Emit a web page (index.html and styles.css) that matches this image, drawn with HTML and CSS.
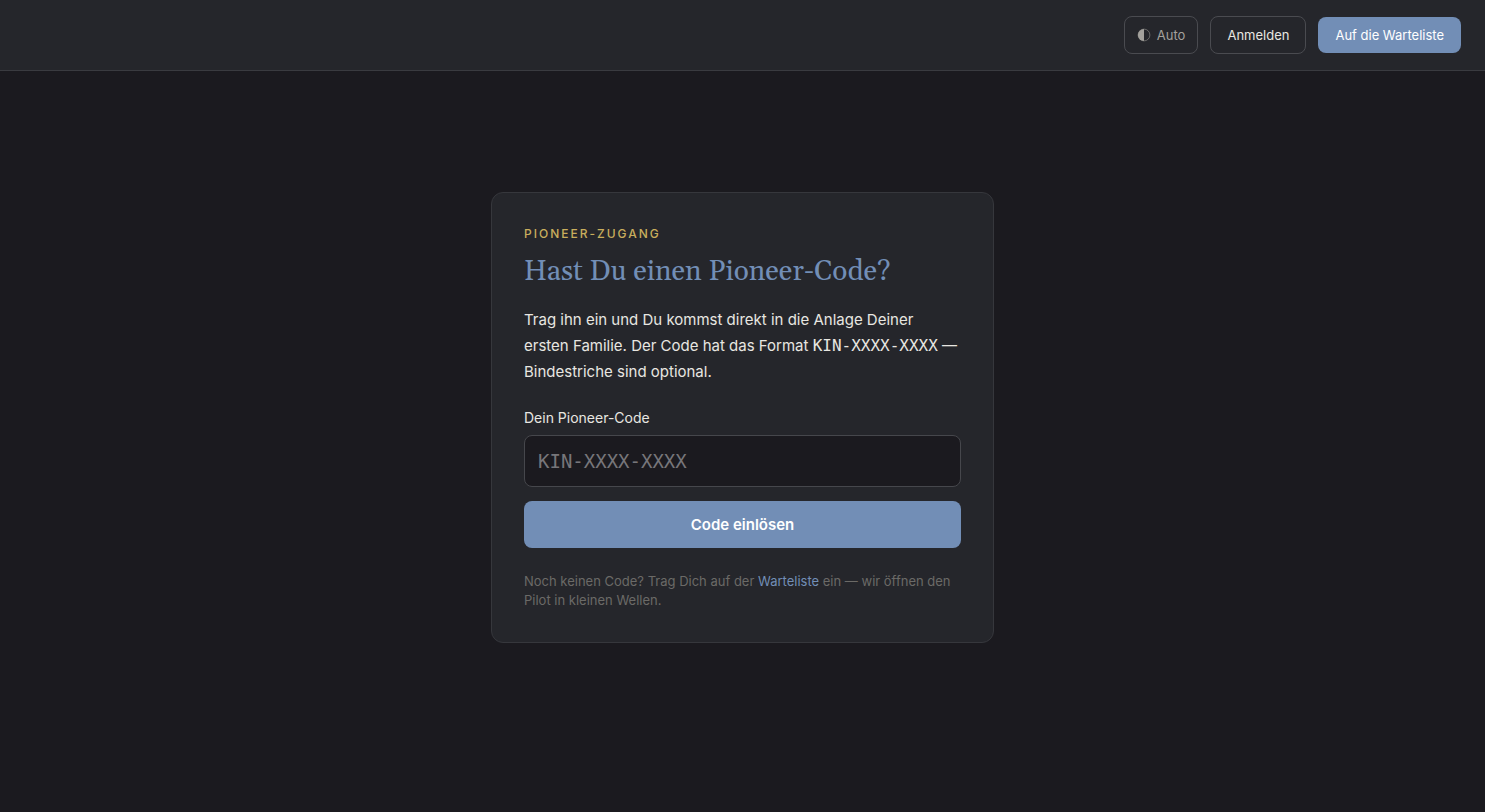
FILE: index.html
```html
<!DOCTYPE html>
<html lang="de">
<head>
  <meta charset="utf-8">
  <meta name="viewport" content="width=device-width, initial-scale=1">
  <title>Pioneer-Zugang</title>
  <link rel="stylesheet" href="styles.css">
</head>
<body>
  <header class="topbar">
    <button type="button" class="btn btn-theme">
      <svg class="theme-icon" viewBox="0 0 14 14" aria-hidden="true">
        <circle cx="7" cy="7" r="5.9" fill="none" stroke="currentColor" stroke-width="0.7" opacity="0.75"/>
        <path d="M7 0.9A6.1 6.1 0 0 0 7 13.1Z" fill="currentColor"/>
      </svg>
      Auto
    </button>
    <a class="btn btn-outline" href="#anmelden">Anmelden</a>
    <a class="btn btn-primary" href="#warteliste">Auf die Warteliste</a>
  </header>
  <main class="page">
    <section class="card">
      <p class="eyebrow">Pioneer-Zugang</p>
      <h1 class="title">Hast Du einen Pioneer-Code?</h1>
      <p class="intro">Trag ihn ein und Du kommst direkt in die Anlage Deiner ersten Familie. Der Code hat das Format <code class="code">KIN-XXXX-XXXX</code> — Bindestriche sind optional.</p>
      <form class="form">
        <label class="label" for="pioneer-code">Dein Pioneer-Code</label>
        <input class="input" id="pioneer-code" type="text" placeholder="KIN-XXXX-XXXX" autocomplete="off">
        <button type="submit" class="submit">Code einlösen</button>
      </form>
      <p class="hint">Noch keinen Code? Trag Dich auf der <a class="link" href="#warteliste">Warteliste</a> ein — wir öffnen den Pilot in kleinen Wellen.</p>
    </section>
  </main>
</body>
</html>
```
FILE: styles.css
```css
*,
*::before,
*::after {
  box-sizing: border-box;
}

body {
  margin: 0;
  min-height: 100vh;
  display: flex;
  flex-direction: column;
  background: #1b1a1f;
  color: #e8e6e1;
  font-family: Inter, "Liberation Sans", sans-serif;
  font-size: 15px;
}

.topbar {
  display: flex;
  align-items: center;
  justify-content: flex-end;
  gap: 12px;
  padding: 16px 24px;
  background: #25262b;
  border-bottom: 1px solid #3a3b40;
}

.btn {
  display: inline-flex;
  align-items: center;
  gap: 6px;
  padding: 8px 16px;
  border: 1px solid #4a4b50;
  border-radius: 8px;
  background: none;
  color: #e8e6e1;
  font-family: inherit;
  font-size: 13px;
  line-height: 20px;
  text-decoration: none;
}

.btn-theme {
  padding: 8px 12px;
  color: #a3a19c;
}

.theme-icon {
  width: 14px;
  height: 14px;
}

.btn-primary {
  padding: 8px 17px;
  border: 0;
  background: #728eb6;
  color: #fff;
}

.page {
  flex: 1;
  display: flex;
  align-items: center;
  justify-content: center;
  padding: 24px 24px 72px;
}

.card {
  width: 100%;
  max-width: 503px;
  padding: 32px;
  background: #25262b;
  border: 1px solid #36373c;
  border-radius: 12px;
}

.eyebrow {
  margin: 0 0 8px;
  color: #c9ae5d;
  font-size: 12px;
  font-weight: 500;
  line-height: 18px;
  letter-spacing: 2px;
  text-transform: uppercase;
}

.title {
  margin: 0 0 14px;
  color: #728eb6;
  font-family: Georgia, Gelasio, "Liberation Serif", serif;
  font-size: 28px;
  font-weight: 400;
  line-height: 42px;
}

.intro {
  margin: 0 0 22px;
  line-height: 26px;
}

.code {
  font-family: "DejaVu Sans Mono", monospace;
  font-size: 16px;
  line-height: 16px;
}

.form {
  display: flex;
  flex-direction: column;
}

.label {
  margin-bottom: 6px;
  font-size: 14px;
  line-height: 22px;
}

.input {
  width: 100%;
  margin: 0 0 14px;
  padding: 13px;
  background: #1b1a1f;
  border: 1px solid #46474c;
  border-radius: 8px;
  color: #e8e6e1;
  font-family: "DejaVu Sans Mono", monospace;
  font-size: 19px;
  line-height: 24px;
}

.input::placeholder {
  color: #77767a;
  opacity: 1;
}

.submit {
  padding: 12px 16px;
  border: 0;
  border-radius: 8px;
  background: #728eb6;
  color: #fff;
  font-family: inherit;
  font-size: 15px;
  font-weight: 600;
  line-height: 23px;
}

.hint {
  margin: 24px 0 0;
  color: #6b6a67;
  font-size: 13px;
  line-height: 19px;
}

.link {
  color: #728eb6;
  text-decoration: none;
}
```
